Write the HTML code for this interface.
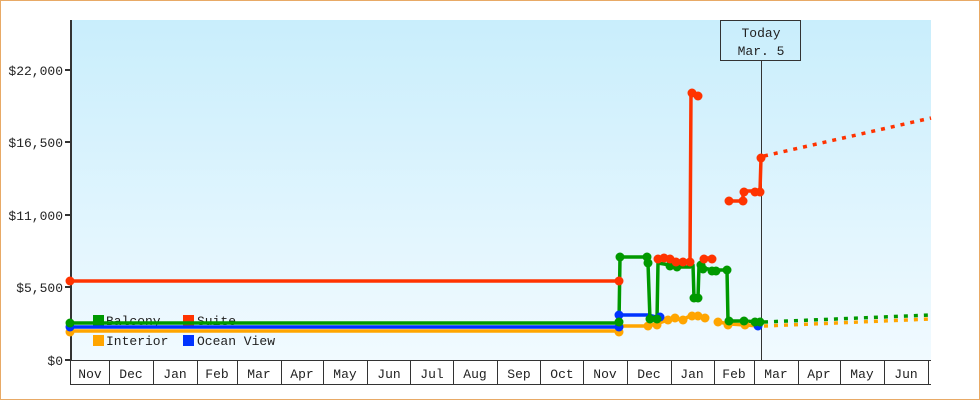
<!DOCTYPE html>
<html><head><meta charset="utf-8"><style>
html,body{margin:0;padding:0;background:#fff}
svg{display:block}
text{font-family:"Liberation Mono","DejaVu Sans Mono",monospace;font-size:13px;fill:#222}
</style></head><body>
<svg width="980" height="400" viewBox="0 0 980 400" xmlns="http://www.w3.org/2000/svg">
<defs><linearGradient id="g" x1="0" y1="0" x2="0" y2="1"><stop offset="0" stop-color="#c9eefc"/><stop offset="1" stop-color="#f1faff"/></linearGradient></defs>
<rect x="0.5" y="0.5" width="979" height="399" fill="#fff" stroke="#e8aa66"/>
<rect x="72" y="20" width="859" height="340" fill="url(#g)"/>
<line x1="71" y1="20" x2="71" y2="361" stroke="#333" stroke-width="2"/>
<g stroke="#333" stroke-width="2">
<line x1="65" y1="70" x2="71" y2="70"/><line x1="65" y1="142" x2="71" y2="142"/><line x1="65" y1="215" x2="71" y2="215"/><line x1="65" y1="287" x2="71" y2="287"/><line x1="65" y1="360" x2="71" y2="360"/></g>
<g text-anchor="end"><text x="63" y="75">$22,000</text><text x="63" y="147">$16,500</text><text x="63" y="220">$11,000</text><text x="63" y="292">$5,500</text><text x="63" y="365">$0</text></g>
<line x1="70" y1="360.5" x2="931" y2="360.5" stroke="#333"/>
<line x1="70" y1="384.5" x2="931" y2="384.5" stroke="#333"/>
<g stroke="#333">
<line x1="70.5" y1="360" x2="70.5" y2="385"/><line x1="109.5" y1="360" x2="109.5" y2="385"/><line x1="153.5" y1="360" x2="153.5" y2="385"/><line x1="197.5" y1="360" x2="197.5" y2="385"/><line x1="237.5" y1="360" x2="237.5" y2="385"/><line x1="281.5" y1="360" x2="281.5" y2="385"/><line x1="323.5" y1="360" x2="323.5" y2="385"/><line x1="367.5" y1="360" x2="367.5" y2="385"/><line x1="410.5" y1="360" x2="410.5" y2="385"/><line x1="453.5" y1="360" x2="453.5" y2="385"/><line x1="497.5" y1="360" x2="497.5" y2="385"/><line x1="540.5" y1="360" x2="540.5" y2="385"/><line x1="583.5" y1="360" x2="583.5" y2="385"/><line x1="627.5" y1="360" x2="627.5" y2="385"/><line x1="671.5" y1="360" x2="671.5" y2="385"/><line x1="714.5" y1="360" x2="714.5" y2="385"/><line x1="754.5" y1="360" x2="754.5" y2="385"/><line x1="798.5" y1="360" x2="798.5" y2="385"/><line x1="840.5" y1="360" x2="840.5" y2="385"/><line x1="884.5" y1="360" x2="884.5" y2="385"/><line x1="928.5" y1="360" x2="928.5" y2="385"/></g>
<g text-anchor="middle">
<text x="90" y="378">Nov</text><text x="131" y="378">Dec</text><text x="175" y="378">Jan</text><text x="217" y="378">Feb</text><text x="259" y="378">Mar</text><text x="302" y="378">Apr</text><text x="345" y="378">May</text><text x="389" y="378">Jun</text><text x="432" y="378">Jul</text><text x="475" y="378">Aug</text><text x="519" y="378">Sep</text><text x="562" y="378">Oct</text><text x="605" y="378">Nov</text><text x="649" y="378">Dec</text><text x="692" y="378">Jan</text><text x="734" y="378">Feb</text><text x="776" y="378">Mar</text><text x="819" y="378">Apr</text><text x="862" y="378">May</text><text x="906" y="378">Jun</text></g>
<line x1="761.5" y1="60" x2="761.5" y2="360" stroke="#333"/>
<rect x="720.5" y="20.5" width="80" height="40" fill="none" stroke="#333"/>
<text x="761" y="37" text-anchor="middle">Today</text><text x="761" y="55" text-anchor="middle">Mar. 5</text>
<rect x="93" y="315" width="11" height="11" fill="#009900"/><text x="106" y="325">Balcony</text>
<rect x="183" y="315" width="11" height="11" fill="#ff3300"/><text x="197" y="325">Suite</text>
<rect x="93" y="335" width="11" height="11" fill="#ffa500"/><text x="106" y="345">Interior</text>
<rect x="183" y="335" width="11" height="11" fill="#0033ff"/><text x="197" y="345">Ocean View</text>
<g fill="none" stroke-width="3.5" stroke-linejoin="round">
<polyline stroke="#ffa500" points="70,331 619,331 619,326 648,326 656,324 662,322 668,320 672,318 682,320 690,316 700,316 706,318"/>
<polyline stroke="#ffa500" points="718,322 730,324 745,325 760,326"/>
<polyline stroke="#0033ff" points="70,327 619,327 619,315 648,315 660,318"/>
<polyline stroke="#009900" points="70,323 619,323 620,257 648,257 648,263 650,320 657,320 658,263 670,265 680,267 690,267 693,265 694,298 698,298 699,266 703,268 713,270 722,270 727,270 728,321 744,321 760,322"/>
<polyline stroke="#ff3300" points="70,281 619,281"/>
<polyline stroke="#ff3300" points="656,259 670,259 680,262 690,262 691,92 696,96"/>
<polyline stroke="#ff3300" points="703,258 713,258"/>
<polyline stroke="#ff3300" points="729,201 743,201 743,191 757,191 760,191 761,158"/>
</g>
<g fill="none" stroke-width="3.5" stroke-dasharray="4,6">
<line x1="764" y1="156" x2="931" y2="118" stroke="#ff3300"/>
<line x1="764" y1="322" x2="931" y2="315" stroke="#009900"/>
<line x1="764" y1="326" x2="931" y2="319" stroke="#ffa500"/>
</g>
<g>
<g fill="#ffa500"><circle cx="70" cy="332" r="4.5"/><circle cx="619" cy="332" r="4.5"/><circle cx="648" cy="326" r="4.5"/><circle cx="657" cy="325" r="4.5"/><circle cx="668" cy="320" r="4.5"/><circle cx="675" cy="318" r="4.5"/><circle cx="683" cy="320" r="4.5"/><circle cx="692" cy="316" r="4.5"/><circle cx="698" cy="316" r="4.5"/><circle cx="705" cy="318" r="4.5"/><circle cx="718" cy="322" r="4.5"/><circle cx="728" cy="325" r="4.5"/><circle cx="745" cy="325" r="4.5"/></g>
<g fill="#0033ff"><circle cx="70" cy="327" r="4.5"/><circle cx="619" cy="327" r="4.5"/><circle cx="619" cy="315" r="4.5"/><circle cx="660" cy="317" r="4.5"/><circle cx="758" cy="326" r="4.5"/></g>
<g fill="#009900"><circle cx="70" cy="323" r="4.5"/><circle cx="619" cy="322" r="4.5"/><circle cx="620" cy="257" r="4.5"/><circle cx="647" cy="257" r="4.5"/><circle cx="648" cy="263" r="4.5"/><circle cx="650" cy="319" r="4.5"/><circle cx="657" cy="319" r="4.5"/><circle cx="670" cy="266" r="4.5"/><circle cx="677" cy="267" r="4.5"/><circle cx="694" cy="298" r="4.5"/><circle cx="698" cy="298" r="4.5"/><circle cx="701" cy="265" r="4.5"/><circle cx="703" cy="269" r="4.5"/><circle cx="712" cy="271" r="4.5"/><circle cx="716" cy="271" r="4.5"/><circle cx="727" cy="270" r="4.5"/><circle cx="729" cy="321" r="4.5"/><circle cx="744" cy="321" r="4.5"/><circle cx="755" cy="322" r="4.5"/><circle cx="760" cy="322" r="4.5"/></g>
<g fill="#ff3300"><circle cx="70" cy="281" r="4.5"/><circle cx="619" cy="281" r="4.5"/><circle cx="658" cy="259" r="4.5"/><circle cx="664" cy="258" r="4.5"/><circle cx="670" cy="259" r="4.5"/><circle cx="676" cy="262" r="4.5"/><circle cx="683" cy="262" r="4.5"/><circle cx="690" cy="262" r="4.5"/><circle cx="692" cy="93" r="4.5"/><circle cx="698" cy="96" r="4.5"/><circle cx="704" cy="259" r="4.5"/><circle cx="712" cy="259" r="4.5"/><circle cx="729" cy="201" r="4.5"/><circle cx="743" cy="201" r="4.5"/><circle cx="744" cy="192" r="4.5"/><circle cx="755" cy="192" r="4.5"/><circle cx="760" cy="192" r="4.5"/><circle cx="761" cy="158" r="4.5"/></g>
</g>
</svg>
</body></html>
